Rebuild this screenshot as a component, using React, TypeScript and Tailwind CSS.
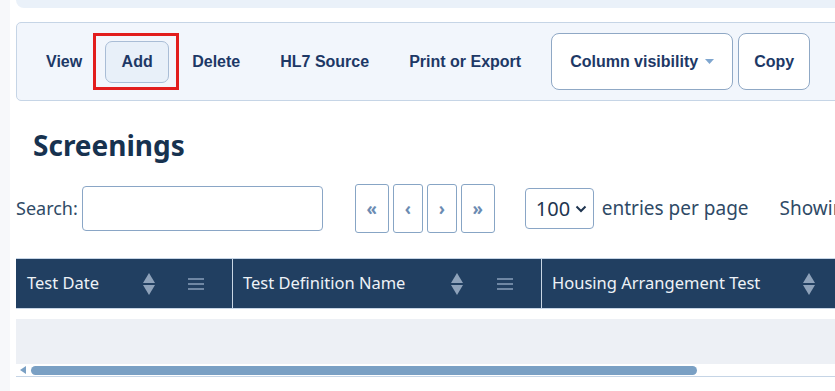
import React from 'react';

const toolText = 'px-[17px] h-[42px] flex items-center whitespace-nowrap text-[16px] font-bold text-[#1d3866]';
const pageBtn = 'h-[49px] border border-[#87a5c5] rounded-[3px] text-[#6b8bb2] text-[17px] font-bold bg-white';

const SortIcon = () => (
  <svg width="12" height="22" viewBox="0 0 12 22" className="shrink-0">
    <path d="M6 0 L12 10 L0 10 Z" fill="#8ea2ba" />
    <path d="M0 12 L12 12 L6 22 Z" fill="#8ea2ba" />
  </svg>
);

const MenuIcon = () => (
  <svg width="16" height="14" viewBox="0 0 16 14" className="shrink-0">
    <rect x="0" y="1" width="16" height="2" fill="#6f87a4" />
    <rect x="0" y="6" width="16" height="2" fill="#6f87a4" />
    <rect x="0" y="11" width="16" height="2" fill="#6f87a4" />
  </svg>
);

const App: React.FC = () => {
  return (
    <div className="w-[835px] h-[391px] overflow-hidden bg-white flex" style={{ fontFamily: '"Noto Sans", sans-serif' }}>
      <div className="w-[10px] shrink-0 bg-[#f7f8fa]" />
      <div className="pl-[6px] w-[900px] shrink-0">
        {/* top panel edge */}
        <div className="h-[8px] rounded-b-[8px] bg-[#eaf1f9]" />

        {/* toolbar */}
        <div className="mt-[14px] h-[79px] w-[880px] border border-[#c6d5e6] rounded-[5px] bg-[#f2f6fc] flex items-center pl-[12px] gap-[6px]" style={{ fontFamily: '"Liberation Sans", Arial, sans-serif' }}>
          <button className={toolText}>View</button>
          <div className="relative shrink-0">
            <button className="h-[42px] w-[64px] flex items-center justify-center rounded-[7px] border border-[#a9bdd6] bg-[#e8f0f9] text-[16px] font-bold text-[#1d3866]">Add</button>
            <span className="absolute -left-[12px] -right-[10px] -top-[8px] -bottom-[7px] border-[3px] border-[#e21d1d]" />
          </div>
          <button className={toolText}>Delete</button>
          <button className={toolText}>HL7 Source</button>
          <button className={toolText}>Print or Export</button>
          <button className="shrink-0 ml-[7px] h-[57px] w-[182px] flex items-center justify-center gap-[7px] whitespace-nowrap rounded-[8px] border border-[#8fa8c5] bg-white text-[16px] font-bold text-[#1d3866]">
            Column visibility
            <svg width="9" height="5" viewBox="0 0 9 5"><path d="M0 0 L9 0 L4.5 5 Z" fill="#7fa6cf" /></svg>
          </button>
          <button className="shrink-0 -ml-[1px] h-[57px] w-[72px] flex items-center justify-center rounded-[8px] border border-[#8fa8c5] bg-white text-[16px] font-bold text-[#1d3866]">Copy</button>
        </div>

        {/* heading */}
        <h2 className="mt-[26px] ml-[17px] text-[28px] leading-[36px] font-bold text-[#17324f]">Screenings</h2>

        {/* controls */}
        <div className="mt-[21px] flex items-center text-[#2f4a66] whitespace-nowrap">
          <label className="shrink-0 text-[18px]">Search:</label>
          <input className="shrink-0 ml-[4px] w-[241px] h-[45px] border border-[#8aa6c6] rounded-[4px] bg-white outline-none" />
          <div className="shrink-0 ml-[32px] flex gap-[4px]">
            <button className={`w-[34px] ${pageBtn}`}>«</button>
            <button className={`w-[30px] ${pageBtn}`}>‹</button>
            <button className={`w-[30px] ${pageBtn}`}>›</button>
            <button className={`w-[34px] ${pageBtn}`}>»</button>
          </div>
          <div className="shrink-0 ml-[30px] w-[69px] h-[41px] border border-[#8aa6c6] rounded-[4px] flex items-center justify-between pl-[10px] pr-[6px]">
            <span className="text-[20px] text-[#1f3550]">100</span>
            <svg width="12" height="8" viewBox="0 0 12 8"><path d="M1.5 1.5 L6 6 L10.5 1.5" stroke="#1f3550" strokeWidth="2" fill="none" /></svg>
          </div>
          <span className="shrink-0 ml-[8px] text-[19px]">entries per page</span>
          <span className="shrink-0 ml-[31px] text-[19px]">Showing 0 to 0 of 0 entries</span>
        </div>

        {/* table */}
        <div className="mt-[25px] w-[880px] border-t border-[#c6d5e6]">
          <div className="h-[50px] bg-[#213f61] flex text-[16.5px] text-[#eef2f7] border-b border-[#c6d5e6] whitespace-nowrap">
            <div className="shrink-0 w-[217px] flex items-center pl-[11px] border-r border-[#c9d6e4]">
              <span className="flex-1">Test Date</span>
              <SortIcon />
              <span className="ml-[33px] mr-[28px]"><MenuIcon /></span>
            </div>
            <div className="shrink-0 w-[309px] flex items-center pl-[10px] border-r border-[#c9d6e4]">
              <span className="flex-1">Test Definition Name</span>
              <SortIcon />
              <span className="ml-[34px] mr-[28px]"><MenuIcon /></span>
            </div>
            <div className="shrink-0 w-[351px] flex items-center pl-[10px]">
              <span className="flex-1">Housing Arrangement Test</span>
              <SortIcon />
              <span className="ml-[34px] mr-[28px]"><MenuIcon /></span>
            </div>
          </div>
          <div className="mt-[10px] h-[45px] bg-[#edf0f5]" />
          <div className="h-[13px] flex items-center pl-[4px] border-b border-[#c6d5e6]">
            <svg width="6" height="8" viewBox="0 0 6 8"><path d="M6 0 L6 8 L0 4 Z" fill="#7aa0c4" /></svg>
            <div className="ml-[5px] w-[666px] h-[9px] rounded-full bg-[#7aa0c4]" />
          </div>
        </div>
      </div>
    </div>
  );
};

export default App;
